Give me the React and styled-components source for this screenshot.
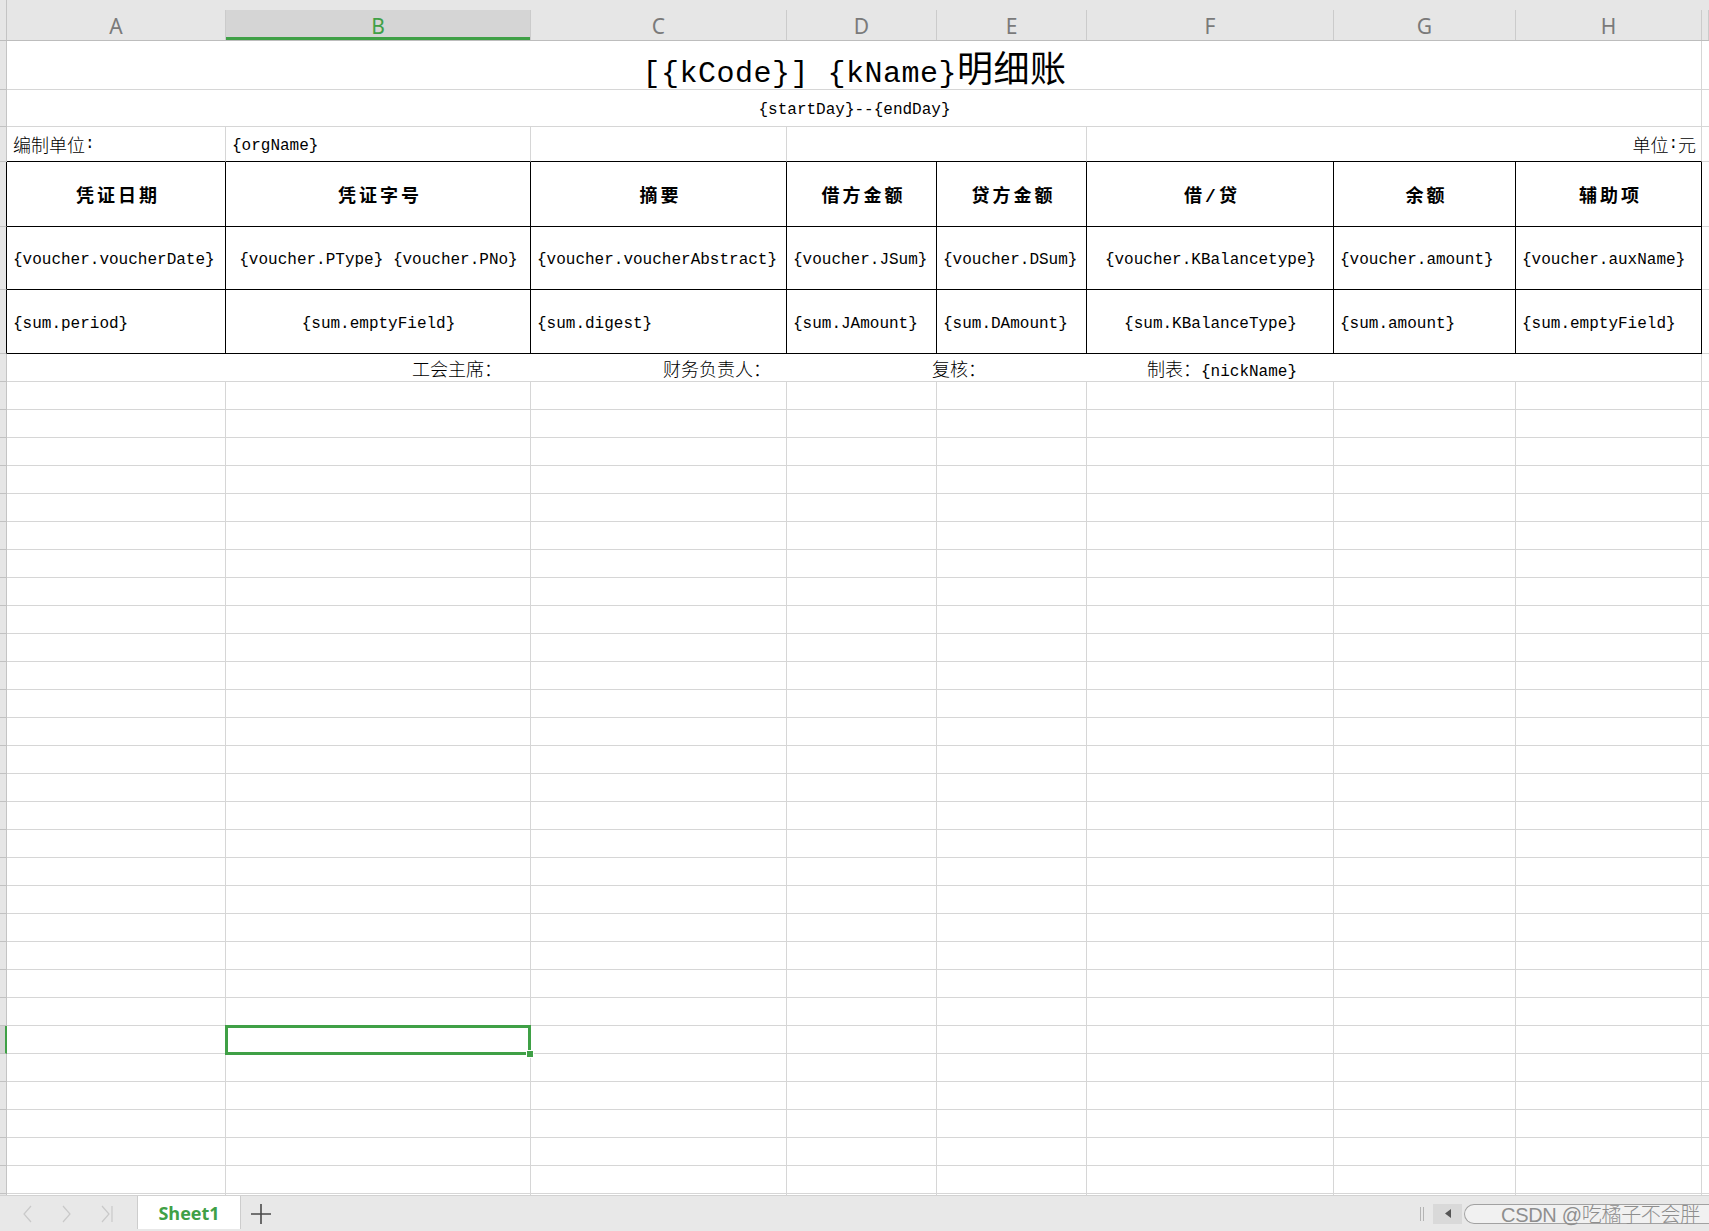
import styled, { createGlobalStyle } from 'styled-components';

const TEMPLATE = '7px 219px 305px 256px 150px 150px 247px 182px 186px 1fr';
const LETTERS = ['A', 'B', 'C', 'D', 'E', 'F', 'G', 'H'];
const GREEN = '#3fa046';
const GRID = '#d6d6d6';

const headers = ['凭证日期', '凭证字号', '摘要', '借方金额', '贷方金额', '借/贷', '余额', '辅助项'];

const voucherRow = [
  ['{voucher.voucherDate}', 'left'],
  ['{voucher.PType} {voucher.PNo}', 'center'],
  ['{voucher.voucherAbstract}', 'left'],
  ['{voucher.JSum}', 'left'],
  ['{voucher.DSum}', 'left'],
  ['{voucher.KBalancetype}', 'center'],
  ['{voucher.amount}', 'left'],
  ['{voucher.auxName}', 'left'],
];

const sumRow = [
  ['{sum.period}', 'left'],
  ['{sum.emptyField}', 'center'],
  ['{sum.digest}', 'left'],
  ['{sum.JAmount}', 'left'],
  ['{sum.DAmount}', 'left'],
  ['{sum.KBalanceType}', 'center'],
  ['{sum.amount}', 'left'],
  ['{sum.emptyField}', 'left'],
];

const signers = ['工会主席：', '财务负责人：', '复核：', '制表：{nickName}'];

const SELECTED_ROW = 31;

const GlobalStyle = createGlobalStyle`
  html, body {
    margin: 0;
    padding: 0;
    background: #fff;
    overflow: hidden;
  }
  #root {
    height: 100vh;
  }
`;

// splits a string so CJK runs get the bigger glyph size, like SimSun full-width
const Mixed = ({ text, han = 18, weight = 300 }) => {
  const parts = text.split(/([\u3000-\u9fff\uff00-\uffef]+)/);
  return parts.map((p, i) =>
    i % 2 ? (
      <Han key={i} $size={han} $weight={weight}>
        {p}
      </Han>
    ) : (
      p
    )
  );
};

const Chevron = ({ dir, bar }) => (
  <svg width="14" height="18" viewBox="0 0 14 18">
    <path
      d={dir === 'left' ? 'M10 1 L3 9 L10 17' : 'M3 1 L10 9 L3 17'}
      fill="none"
      stroke="currentColor"
      strokeWidth="1.2"
    />
    {bar && <path d="M13 1 L13 17" stroke="currentColor" strokeWidth="1.2" />}
  </svg>
);

const App = () => {
  const emptyRows = Array.from({ length: 30 }, (_, i) => i + 8);

  return (
    <Page>
      <GlobalStyle />
      <HeaderBar>
        <Corner />
        {LETTERS.map((l) => (
          <ColHead key={l} $active={l === 'B'}>
            {l}
          </ColHead>
        ))}
        <ColHead />
      </HeaderBar>

      <Sheet>
        {/* row 1: title */}
        <RowHead />
        <Cell $span={8} $align="center">
          <TitleText>
            <Mixed text="[{kCode}] {kName}明细账" han={36} weight={400} />
          </TitleText>
        </Cell>
        <Cell />

        {/* row 2: period */}
        <RowHead />
        <Cell $span={8} $align="center">
          <Latin>{'{startDay}--{endDay}'}</Latin>
        </Cell>
        <Cell />

        {/* row 3 */}
        <RowHead />
        <Cell $boxBottom>
          <Mixed text="编制单位:" />
        </Cell>
        <Cell $boxBottom>
          <Latin>{'{orgName}'}</Latin>
        </Cell>
        <Cell $boxBottom />
        <Cell $boxBottom $span={2} />
        <Cell $boxBottom $span={3} $align="right">
          <Mixed text="单位:元" />
        </Cell>
        <Cell />

        {/* row 4: headers */}
        <RowHead $boxed />
        {headers.map((h) => (
          <Cell key={h} $boxRight $boxBottom $align="center">
            <HeadText>{h}</HeadText>
          </Cell>
        ))}
        <Cell />

        {/* row 5 */}
        <RowHead $boxed />
        {voucherRow.map(([t, a], i) => (
          <Cell key={i} $boxRight $boxBottom $align={a}>
            <Latin>{t}</Latin>
          </Cell>
        ))}
        <Cell />

        {/* row 6 */}
        <RowHead $boxed />
        {sumRow.map(([t, a], i) => (
          <Cell key={i} $boxRight $boxBottom $align={a}>
            <Latin>{t}</Latin>
          </Cell>
        ))}
        <Cell />

        {/* row 7: signatures */}
        <RowHead />
        <Cell $span={8} $align="center">
          <Signers>
            {signers.map((s) => (
              <span key={s}>
                <Mixed text={s} />
              </span>
            ))}
          </Signers>
        </Cell>
        <Cell />

        {emptyRows.map((r) => (
          <EmptyRow key={r} row={r} />
        ))}
      </Sheet>

      <TabBar>
        <NavGroup>
          <NavButton>
            <Chevron dir="left" />
          </NavButton>
          <NavButton>
            <Chevron dir="right" />
          </NavButton>
          <NavButton>
            <Chevron dir="right" bar />
          </NavButton>
        </NavGroup>
        <SheetTab>Sheet1</SheetTab>
        <AddButton>
          <svg width="22" height="22" viewBox="0 0 22 22">
            <path d="M11 1 V21 M1 11 H21" stroke="#4a4a4a" strokeWidth="1.6" />
          </svg>
        </AddButton>
        <Spacer />
        <ScrollArea>
          <Grip />
          <ScrollButton>
            <svg width="6" height="9" viewBox="0 0 6 9">
              <polygon points="6,0 0,4.5 6,9" fill="#555" />
            </svg>
          </ScrollButton>
          <Thumb>
            <Watermark>CSDN @吃橘子不会胖</Watermark>
          </Thumb>
        </ScrollArea>
      </TabBar>
    </Page>
  );
};

const EmptyRow = ({ row }) => {
  const selected = row === SELECTED_ROW;
  return (
    <>
      <RowHead $selected={selected} />
      {LETTERS.map((l) =>
        selected && l === 'B' ? <SelectedCell key={l} /> : <Cell key={l} />
      )}
      <Cell />
    </>
  );
};

export default App;

const Page = styled.div`
  display: flex;
  flex-direction: column;
  height: 100vh;
  background: #fff;
`;

const HeaderBar = styled.div`
  display: grid;
  grid-template-columns: ${TEMPLATE};
  height: 41px;
  box-sizing: border-box;
  padding-top: 10px;
  background: #e6e6e6;
  border-bottom: 1px solid #bdbdbd;
  flex-shrink: 0;
`;

const Corner = styled.div`
  border-right: 1px solid #c4c4c4;
  margin-top: -10px;
`;

const ColHead = styled.div`
  display: flex;
  align-items: center;
  justify-content: center;
  font-family: 'Noto Sans', 'Open Sans', sans-serif;
  font-size: 21px;
  font-weight: 400;
  color: ${(p) => (p.$active ? GREEN : '#7a7a7a')};
  background: ${(p) => (p.$active ? '#d5d5d5' : 'transparent')};
  border-right: 1px solid #cbcbcb;
  box-shadow: ${(p) => (p.$active ? `inset 0 -3px 0 ${GREEN}` : 'none')};
  padding-top: 1px;
`;

const Sheet = styled.div`
  flex: 1;
  min-height: 0;
  overflow: hidden;
  display: grid;
  grid-template-columns: ${TEMPLATE};
  grid-template-rows: 49px 37px 35px 65px 63px 64px 28px;
  grid-auto-rows: 28px;
  font-family: 'Liberation Mono', 'Noto Sans CJK SC', monospace;
  font-size: 16px;
  color: #000;
`;

const RowHead = styled.div`
  box-sizing: border-box;
  background: ${(p) => (p.$selected ? '#d3d3d3' : '#e6e6e6')};
  border-bottom: 1px solid #c2c2c2;
  border-right: ${(p) =>
    p.$selected ? `2px solid ${GREEN}` : p.$boxed ? '1px solid #000' : '1px solid #c4c4c4'};
`;

const Cell = styled.div`
  box-sizing: border-box;
  grid-column: span ${(p) => p.$span || 1};
  display: flex;
  align-items: center;
  justify-content: ${(p) =>
    p.$align === 'center' ? 'center' : p.$align === 'right' ? 'flex-end' : 'flex-start'};
  padding: 0 5px 0 6px;
  min-width: 0;
  white-space: nowrap;
  border-right: 1px solid ${(p) => (p.$boxRight ? '#000' : GRID)};
  border-bottom: 1px solid ${(p) => (p.$boxBottom ? '#000' : GRID)};
`;

const SelectedCell = styled(Cell)`
  position: relative;

  &::after {
    content: '';
    position: absolute;
    left: -1px;
    top: -1px;
    right: -1px;
    bottom: -2px;
    border: 3px solid ${GREEN};
    pointer-events: none;
  }

  &::before {
    content: '';
    position: absolute;
    right: -4px;
    bottom: -5px;
    width: 6px;
    height: 6px;
    background: ${GREEN};
    border: 1px solid #fff;
    z-index: 2;
  }
`;

/* Courier sits higher than SimSun did; nudge lone Latin text down a little */
const Latin = styled.span`
  position: relative;
  top: 2px;
`;

const Han = styled.span`
  font-family: 'Noto Sans CJK SC', sans-serif;
  font-size: ${(p) => p.$size}px;
  font-weight: ${(p) => p.$weight};
`;

const TitleText = styled.div`
  font-size: 30px;
  padding-top: 1px;
  letter-spacing: 0.5px;
`;

const HeadText = styled.span`
  font-family: 'Liberation Mono', 'Noto Sans CJK SC', monospace;
  font-size: 18px;
  font-weight: 700;
  letter-spacing: 3px;
  margin-right: -3px;
`;

const Signers = styled.div`
  display: flex;
  gap: 161px;
  align-items: baseline;
`;

const TabBar = styled.div`
  display: flex;
  height: 36px;
  flex-shrink: 0;
  box-sizing: border-box;
  background: #e8e8e8;
  border-top: 1px solid #d2d2d2;
`;

const NavGroup = styled.div`
  display: flex;
  align-items: center;
  width: 137px;
  padding-left: 8px;
  box-sizing: border-box;
`;

const NavButton = styled.div`
  width: 39px;
  display: flex;
  justify-content: center;
  color: #c9c9c9;
`;

const SheetTab = styled.div`
  width: 104px;
  box-sizing: border-box;
  margin-bottom: 2px;
  background: #fff;
  border-left: 1px solid #cdcdcd;
  border-right: 1px solid #cdcdcd;
  display: flex;
  align-items: center;
  justify-content: center;
  font-family: 'Open Sans', 'Noto Sans', sans-serif;
  font-size: 18px;
  font-weight: 700;
  color: ${GREEN};
`;

const AddButton = styled.div`
  width: 40px;
  display: flex;
  align-items: center;
  justify-content: center;
`;

const Spacer = styled.div`
  flex: 1;
`;

const ScrollArea = styled.div`
  width: 292px;
  flex-shrink: 0;
  display: flex;
  align-items: center;
  overflow: hidden;
`;

const Grip = styled.div`
  flex-shrink: 0;
  width: 2px;
  height: 14px;
  margin: 0 9px 0 3px;
  border-left: 1px solid #b4b4b4;
  border-right: 1px solid #b4b4b4;
`;

const ScrollButton = styled.div`
  flex-shrink: 0;
  width: 29px;
  height: 20px;
  margin-right: 2px;
  background: #d9d9d9;
  display: flex;
  align-items: center;
  justify-content: center;
`;

const Thumb = styled.div`
  flex-shrink: 0;
  width: 270px;
  height: 20px;
  box-sizing: border-box;
  border: 1px solid #a2a2a2;
  border-right: none;
  border-radius: 10px 0 0 10px;
  background: #f1f1f1;
  display: flex;
  align-items: center;
  padding-left: 36px;
`;

const Watermark = styled.span`
  font-family: 'Liberation Sans', 'Noto Sans CJK SC', sans-serif;
  font-size: 20px;
  font-weight: 300;
  color: #8e8e8e;
  white-space: nowrap;
  letter-spacing: -0.3px;
`;
